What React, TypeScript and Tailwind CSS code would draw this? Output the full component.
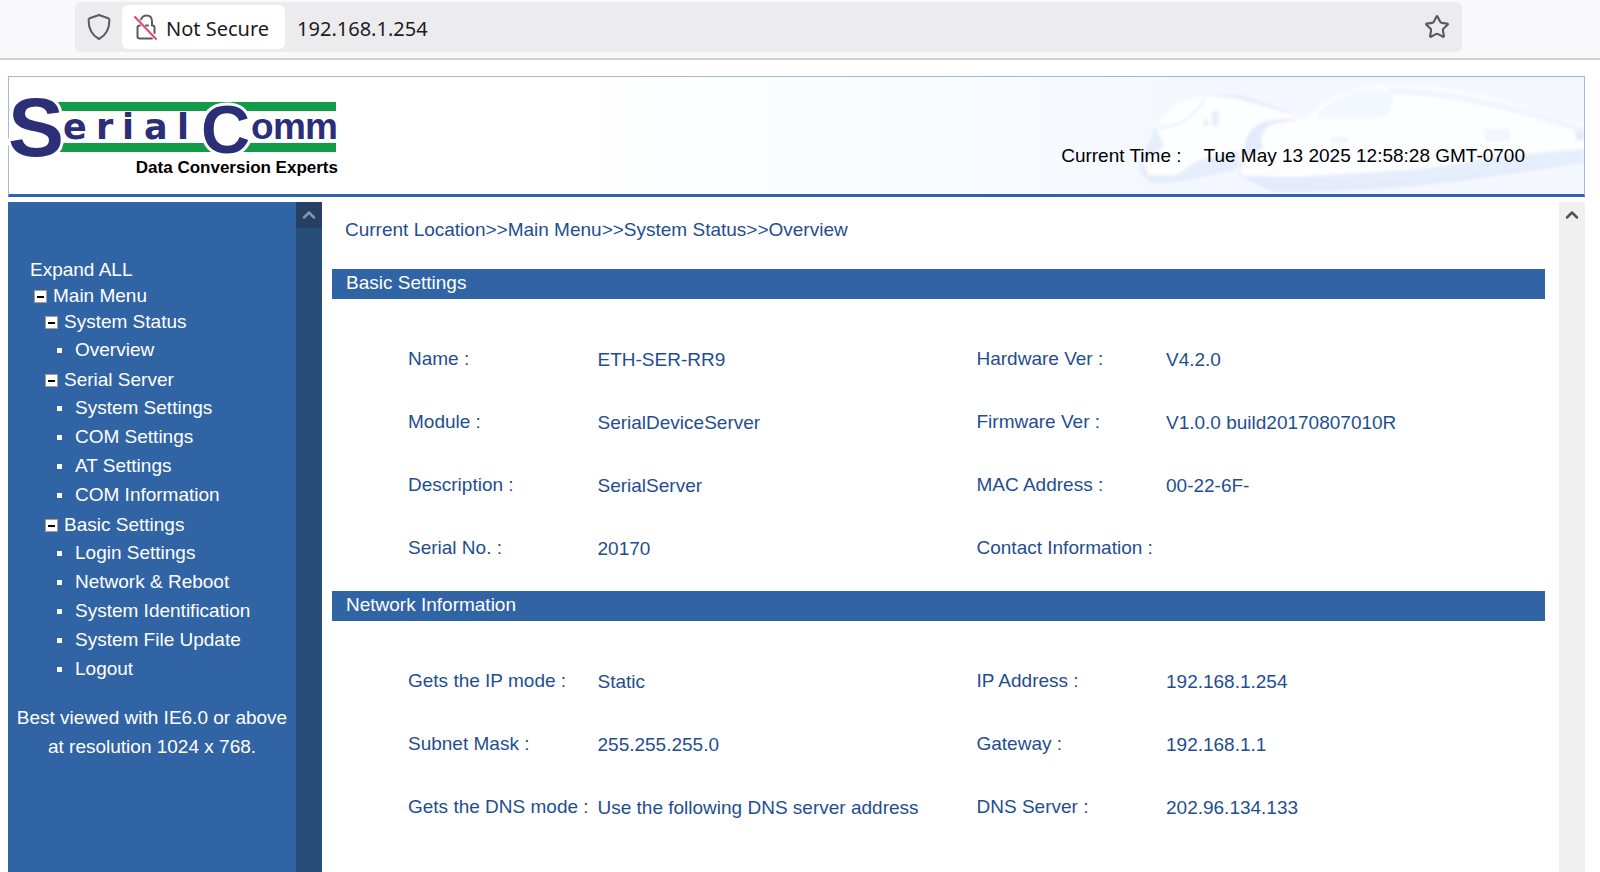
import { ChevronUp, Star } from "lucide-react";
import { clsx } from "clsx";

const MENU = [
  { title: "System Status", items: ["Overview"] },
  {
    title: "Serial Server",
    items: ["System Settings", "COM Settings", "AT Settings", "COM Information"],
  },
  {
    title: "Basic Settings",
    items: [
      "Login Settings",
      "Network & Reboot",
      "System Identification",
      "System File Update",
      "Logout",
    ],
  },
];

// each row: label, value, label, value
const BASIC = [
  ["Name :", "ETH-SER-RR9", "Hardware Ver :", "V4.2.0"],
  ["Module :", "SerialDeviceServer", "Firmware Ver :", "V1.0.0 build20170807010R"],
  ["Description :", "SerialServer", "MAC Address :", "00-22-6F-"],
  ["Serial No. :", "20170", "Contact Information :", ""],
];

const NETWORK = [
  ["Gets the IP mode :", "Static", "IP Address :", "192.168.1.254"],
  ["Subnet Mask :", "255.255.255.0", "Gateway :", "192.168.1.1"],
  [
    "Gets the DNS mode :",
    "Use the following DNS server address",
    "DNS Server :",
    "202.96.134.133",
  ],
];

function ShieldIcon() {
  return (
    <svg width="24" height="28" viewBox="0 0 24 28" fill="none" aria-hidden="true">
      <path
        d="M12 2 L21.2 5.2 Q22.4 5.7 22.4 7 C22.4 16 19.5 22 12 26 C4.5 22 1.6 16 1.6 7 Q1.6 5.7 2.8 5.2 Z"
        stroke="#5b5b66"
        strokeWidth="2"
        strokeLinejoin="round"
      />
    </svg>
  );
}

function InsecureLockIcon() {
  return (
    <svg width="24" height="28" viewBox="0 0 24 28" fill="none" aria-hidden="true">
      <path
        d="M7 6.5 C8 4 10 2.5 12.5 2.5 C16 2.5 18 5 18 8.5 V12 M18 12.5 H18.5 Q20.5 12.5 20.5 14.5 V20 M12 12.5 H14 M6 12.5 Q3.5 12.5 3.5 14.5 V23.5 Q3.5 25.5 5.5 25.5 H18"
        stroke="#5b5b66"
        strokeWidth="2"
        strokeLinecap="round"
      />
      <path d="M1 4 L22 26" stroke="#e8476a" strokeWidth="2" strokeLinecap="round" />
    </svg>
  );
}

function AddressBar() {
  return (
    <div className="flex h-[60px] items-start border-b-2 border-[#d3d3d6] bg-[#f9f9fb] pt-0.5 pr-[138px] pl-[75px] font-['Noto_Sans',sans-serif] text-[20px] text-[#1c1b22]">
      <div className="flex h-[50px] flex-1 items-center rounded-md bg-[#ececee] pr-3">
        <button type="button" aria-label="Tracking protection" className="ml-3 h-7">
          <ShieldIcon />
        </button>
        <button
          type="button"
          className="ml-[11px] flex h-11 items-center gap-2 rounded-md bg-white pr-4 pl-3"
        >
          <InsecureLockIcon />
          <span className="pt-1">Not Secure</span>
        </button>
        <input
          aria-label="Address"
          defaultValue="192.168.1.254"
          className="ml-3 min-w-0 flex-1 bg-transparent pt-1 outline-none"
        />
        <button type="button" aria-label="Bookmark this page">
          <Star size={26} color="#5b5b66" />
        </button>
      </div>
    </div>
  );
}

function Logo() {
  return (
    <svg
      width="334"
      height="84"
      viewBox="0 0 334 84"
      role="img"
      aria-label="SerialComm Data Conversion Experts"
      className="overflow-visible font-['Liberation_Sans',Arial,sans-serif]"
    >
      <g fill="#139b4a">
        <rect x="48" y="8" width="279" height="9" />
        <rect x="48" y="49" width="279" height="9" />
      </g>
      <g
        fill="#2b2f77"
        stroke="#fff"
        strokeWidth="6"
        paintOrder="stroke"
        fontWeight="bold"
      >
        <text x="-1" y="62" fontSize="84">S</text>
        <text x="192" y="59" fontSize="68">C</text>
      </g>
      <g fill="#2b2f77" fontWeight="bold">
        <text x="54 87 113 135 168" y="45" fontSize="35" fontFamily="DejaVu Sans">
          erial
        </text>
        <text x="242 264 296" y="45" fontSize="37">
          omm
        </text>
      </g>
      <text x="329" y="79" fontSize="17" fontWeight="bold" textAnchor="end">
        Data Conversion Experts
      </text>
    </svg>
  );
}

// faded high-speed trains behind the clock
function Trains() {
  return (
    <svg
      width="464"
      height="117"
      viewBox="0 0 464 117"
      aria-hidden="true"
      className="absolute top-0 right-0"
    >
      <defs>
        <filter id="soft">
          <feGaussianBlur stdDeviation="1.6" />
        </filter>
      </defs>
      <g filter="url(#soft)">
        <path
          d="M18 93 L29 106 Q50 108 78 101 L118 92 V40 L185 40 L122 18 Q80 16 48 34 L35 50 Z"
          fill="#e6edfc"
        />
        <path
          d="M36 50 Q50 24 85 20 Q112 18 140 28 L186 41 L150 44 Q125 50 124 72 L78 84 L56 98 L28 98 L24 84 L44 70 Z"
          fill="#fdfeff"
        />
        <path d="M38 50 Q66 52 85 22" fill="none" stroke="#edf3fd" strokeWidth="3" />
        <path d="M92 34 h7 v15 h-7 z M84 42 h4 v7 h-4 z" fill="#e8effc" />
        <path
          d="M118 98 L124 70 Q128 46 152 43 L190 41 L464 48 V86 L340 104 Q240 116 152 115 Z"
          fill="#e3ebfc"
        />
        <path
          d="M186 41 Q214 14 255 8 Q320 6 381 23 L464 48 V80 L300 92 L180 100 L122 99 Q118 94 126 82 L144 70 Q136 60 150 48 Z"
          fill="#fdfeff"
        />
        <path d="M196 38 Q220 14 256 12 Q280 14 270 34 Q262 44 238 42 L200 42 Z" fill="#f3f7fe" />
        <path d="M268 14 Q350 14 464 54" fill="none" stroke="#f1f6fe" strokeWidth="7" />
        <path d="M210 60 l20 0 l-5 6 h-14 z M364 52 h26 v12 h-24 z" fill="#f1f5fd" />
        <path d="M456 54 h8 v9 h-8 z" fill="#e3ebfb" />
        <path d="M464 72 L370 80 Q320 92 250 96 Q210 100 190 98 L240 106 L340 98 L464 86 Z" fill="#e6eefc" />
      </g>
    </svg>
  );
}

function Banner() {
  return (
    <header className="relative flex h-[121px] items-center justify-between border border-b-3 border-[#a3b7dc] border-b-[#3065ad] bg-linear-to-r from-white from-35% to-[#f4f8fe] to-75% pr-[59px]">
      <Trains />
      <Logo />
      <p className="relative flex gap-[22px] pt-10 whitespace-pre text-black">
        <span>Current Time :</span>
        <time>Tue May 13 2025 12:58:28 GMT-0700</time>
      </p>
    </header>
  );
}

function ScrollStrip({ dark = false }: { dark?: boolean }) {
  return (
    <div
      className={clsx(
        "w-[26px] shrink-0",
        dark ? "bg-[#294d79] text-[#8496ae]" : "bg-[#f0f0f0] text-[#555]"
      )}
    >
      <button
        type="button"
        aria-label="Scroll up"
        className={clsx(
          "flex h-[26px] w-full items-center justify-center",
          dark && "bg-[#263f63]"
        )}
      >
        <ChevronUp size={20} strokeWidth={3} />
      </button>
    </div>
  );
}

function TreeToggle({ label }: { label: string }) {
  return (
    <button type="button" className="flex h-[26px] items-center gap-1.5">
      <span className="mt-px flex size-[13px] items-center justify-center border border-[#a39c94] bg-white">
        <span className="h-0.5 w-[7px] bg-black" />
      </span>
      {label}
    </button>
  );
}

function Sidebar() {
  return (
    <aside className="flex w-[314px] shrink-0 bg-[#3164a4] text-white">
      <div className="flex-1 pt-[55px]">
        <nav className="pl-[22px]">
          <a href="#expand" className="flex h-[26px] items-center">
            Expand ALL
          </a>
          <div className="pl-1">
            <TreeToggle label="Main Menu" />
          </div>
          <div className="space-y-[3px] pl-[15px]">
            {MENU.map(({ title, items }) => (
              <div key={title}>
                <TreeToggle label={title} />
                <ul className="pl-3">
                  {items.map((item) => (
                    <li key={item} className="flex h-[29px] items-center gap-[13px]">
                      <span className="mt-0.5 size-[5px] bg-white" />
                      <a href="#page">{item}</a>
                    </li>
                  ))}
                </ul>
              </div>
            ))}
          </div>
        </nav>
        <p className="mt-5 px-1.5 text-center leading-[29px]">
          Best viewed with IE6.0 or above
          <br />
          at resolution 1024 x 768.
        </p>
      </div>
      <ScrollStrip dark />
    </aside>
  );
}

function Section({ title, rows }: { title: string; rows: string[][] }) {
  return (
    <section className="mb-3">
      <h2 className="flex h-[30px] items-center bg-[#3164a4] pb-0.5 pl-[14px] text-white">
        {title}
      </h2>
      <div className="pt-7 pl-[76px]">
        <table className="w-full table-fixed text-left whitespace-nowrap">
          <colgroup>
            <col className="w-1/6" />
            <col className="w-1/3" />
            <col className="w-1/6" />
            <col className="w-1/3" />
          </colgroup>
          <tbody>
            {rows.map(([labelA, valueA, labelB, valueB]) => (
              <tr key={labelA} className="h-[63px]">
                <th className="font-normal">{labelA}</th>
                <td className="pt-0.5">{valueA}</td>
                <th className="font-normal">{labelB}</th>
                <td className="pt-0.5">{valueB}</td>
              </tr>
            ))}
          </tbody>
        </table>
      </div>
    </section>
  );
}

export default function App() {
  return (
    <div className="flex min-h-screen flex-col bg-white">
      <AddressBar />
      <div className="flex flex-1 flex-col gap-[5px] pt-4 pr-[15px] pl-2 font-['Liberation_Sans',Arial,sans-serif] text-[19px] leading-6">
        <Banner />
        <div className="flex flex-1">
          <Sidebar />
          <main className="flex-1 pr-[14px] pl-[10px] text-[#1f4e8f]">
            <p className="pt-4 pb-[27px] pl-[13px]">
              Current Location&gt;&gt;Main Menu&gt;&gt;System Status&gt;&gt;Overview
            </p>
            <Section title="Basic Settings" rows={BASIC} />
            <Section title="Network Information" rows={NETWORK} />
          </main>
          <ScrollStrip />
        </div>
      </div>
    </div>
  );
}
